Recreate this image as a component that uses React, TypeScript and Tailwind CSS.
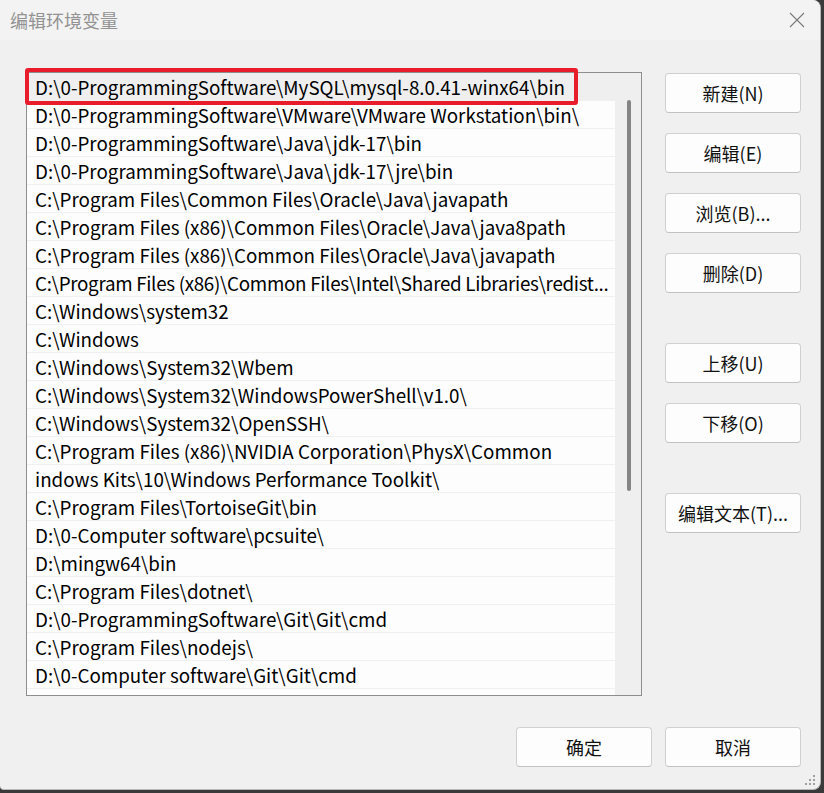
import React from "react";

const rows = [
  "D:\\0-ProgrammingSoftware\\MySQL\\mysql-8.0.41-winx64\\bin",
  "D:\\0-ProgrammingSoftware\\VMware\\VMware Workstation\\bin\\",
  "D:\\0-ProgrammingSoftware\\Java\\jdk-17\\bin",
  "D:\\0-ProgrammingSoftware\\Java\\jdk-17\\jre\\bin",
  "C:\\Program Files\\Common Files\\Oracle\\Java\\javapath",
  "C:\\Program Files (x86)\\Common Files\\Oracle\\Java\\java8path",
  "C:\\Program Files (x86)\\Common Files\\Oracle\\Java\\javapath",
  "C:\\Program Files (x86)\\Common Files\\Intel\\Shared Libraries\\redist...",
  "C:\\Windows\\system32",
  "C:\\Windows",
  "C:\\Windows\\System32\\Wbem",
  "C:\\Windows\\System32\\WindowsPowerShell\\v1.0\\",
  "C:\\Windows\\System32\\OpenSSH\\",
  "C:\\Program Files (x86)\\NVIDIA Corporation\\PhysX\\Common",
  "indows Kits\\10\\Windows Performance Toolkit\\",
  "C:\\Program Files\\TortoiseGit\\bin",
  "D:\\0-Computer software\\pcsuite\\",
  "D:\\mingw64\\bin",
  "C:\\Program Files\\dotnet\\",
  "D:\\0-ProgrammingSoftware\\Git\\Git\\cmd",
  "C:\\Program Files\\nodejs\\",
  "D:\\0-Computer software\\Git\\Git\\cmd",
  "",
];

const font = { fontFamily: '"Noto Sans CJK SC", "Noto Sans", sans-serif' };

function Btn({ children }: { children: React.ReactNode }) {
  return (
    <button className="w-[136px] h-[40px] rounded-[4px] border border-[#d0d0d0] border-b-[#c2c2c2] bg-[#fdfdfd] text-[18px] text-[#111111] flex items-center justify-center leading-none">
      {children}
    </button>
  );
}

export default function App() {
  return (
    <div
      className="w-[824px] h-[793px] bg-[#3a3a3a] overflow-hidden"
      style={font}
    >
      <div className="relative w-[821px] h-[790px] bg-[#f0f0f0] rounded-tr-[8px] rounded-br-[8px] rounded-bl-[4px] border-r border-b border-[#b8b8b8] flex flex-col">
        {/* title bar */}
        <div className="h-[40px] bg-[#f3f3f3] rounded-tr-[8px] flex items-center justify-between pl-[10px] pr-[14px]">
          <span className="text-[18px] text-[#929292] leading-none">编辑环境变量</span>
          <svg width="16" height="16" viewBox="0 0 16 16" className="mr-[1px]">
            <path d="M1 1 L15 15 M15 1 L1 15" stroke="#7a7a7a" strokeWidth="1.1" fill="none" />
          </svg>
        </div>

        {/* body */}
        <div className="relative flex pl-[26px] pt-[32px]">
          {/* list */}
          <div className="relative w-[616px] h-[624px] border border-[#8e8e8e] bg-white flex">
            <div className="w-[588px] h-full overflow-hidden">
              {rows.map((r, i) => (
                <div
                  key={i}
                  className={`h-[28px] border-b border-[#f0f0f0] pl-[8px] pt-[1px] flex items-center whitespace-nowrap overflow-hidden text-[18.8px] text-black leading-none ${
                    i === 0 ? "bg-[#efefef]" : "bg-[#fdfdfd]"
                  } ${i === 7 ? "tracking-[-0.3px] pr-0" : "pr-[2px]"}`}
                >
                  {r}
                </div>
              ))}
            </div>
            <div className="w-[26px] h-full bg-[#efefef] flex justify-center pt-[27px] pl-[1px]">
              <div className="w-[4px] h-[391px] bg-[#858585] rounded-[2px]" />
            </div>
            {/* red highlight */}
            <div className="absolute left-[-2px] top-[-5px] w-[553px] h-[37px] border-[4px] border-[#e81c2a] rounded-[3px] pointer-events-none" />
          </div>

          {/* side buttons */}
          <div className="ml-[23px] flex flex-col pt-[1px]">
            <div className="flex flex-col gap-[20px]">
              <Btn>新建(N)</Btn>
              <Btn>编辑(E)</Btn>
              <Btn>浏览(B)...</Btn>
              <Btn>删除(D)</Btn>
            </div>
            <div className="flex flex-col gap-[20px] mt-[50px]">
              <Btn>上移(U)</Btn>
              <Btn>下移(O)</Btn>
            </div>
            <div className="mt-[50px]">
              <Btn>编辑文本(T)...</Btn>
            </div>
          </div>
        </div>

        {/* footer */}
        <div className="flex justify-end gap-[13px] pr-[19px] mt-[31px]">
          <Btn>确定</Btn>
          <Btn>取消</Btn>
        </div>

        {/* resize grip */}
        <svg
          width="12"
          height="12"
          viewBox="0 0 12 12"
          className="absolute right-[3px] bottom-[2px]"
        >
          <rect x="8" y="0" width="2" height="2" fill="#a0a0a0" />
          <rect x="4" y="4" width="2" height="2" fill="#a0a0a0" />
          <rect x="8" y="4" width="2" height="2" fill="#a0a0a0" />
          <rect x="0" y="8" width="2" height="2" fill="#a0a0a0" />
          <rect x="4" y="8" width="2" height="2" fill="#a0a0a0" />
          <rect x="8" y="8" width="2" height="2" fill="#a0a0a0" />
        </svg>
      </div>
    </div>
  );
}
